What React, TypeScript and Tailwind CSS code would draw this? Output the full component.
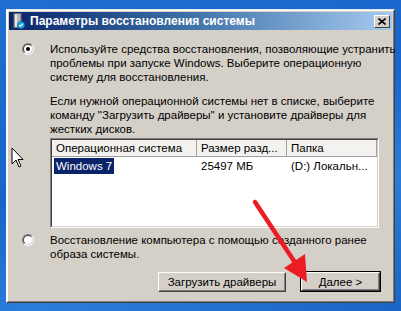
import React from "react";

const font = { fontFamily: '"Liberation Sans", Arial, sans-serif' };

const Radio = ({ checked }: { checked?: boolean }) => (
  <div className="w-[12px] h-[12px] rounded-full border border-t-[#808080] border-l-[#808080] border-r-white border-b-white shrink-0">
    <div className="w-full h-full rounded-full border border-t-[#404040] border-l-[#404040] border-r-[#d4d0c8] border-b-[#d4d0c8] bg-white flex items-center justify-center">
      {checked && <div className="w-[4px] h-[4px] rounded-full bg-black" />}
    </div>
  </div>
);

const WinButton = ({ label, primary }: { label: string; primary?: boolean }) => (
  <div className={primary ? "border border-black" : "border border-transparent"}>
    <div className="w-[79px] h-[19px] border border-t-white border-l-white border-r-[#404040] border-b-[#404040] bg-[#d4d0c8]">
      <div className="w-full h-full border border-t-[#d4d0c8] border-l-[#d4d0c8] border-r-[#808080] border-b-[#808080] flex items-center justify-center text-[11.5px] text-black">
        {label}
      </div>
    </div>
  </div>
);

const HeaderCell = ({ label, w }: { label: string; w: string }) => (
  <div className={`${w} h-[17px] border-r border-r-[#a0a0a0] border-b border-b-[#a0a0a0] bg-[#f3f2ee] pl-[4px] flex items-center whitespace-nowrap overflow-hidden`}>
    {label}
  </div>
);

export default function App() {
  return (
    <div
      className="relative w-[401px] h-[311px] overflow-hidden pl-[6px] pt-[9px] bg-[linear-gradient(160deg,#1f6fd2_0%,#1765cb_45%,#2b7ddb_70%,#1a64c6_100%)]"
      style={font}
    >
      <div className="w-[389px] h-[294px] border border-t-[#e8e6e0] border-l-white border-r-[#404040] border-b-[#404040] bg-[#d4d0c8]">
        <div className="w-full h-full border border-t-white border-l-white border-r-[#808080] border-b-[#808080] p-px flex flex-col">
          {/* title bar */}
          <div className="h-[18px] flex items-center pl-[4px] pr-[2px] bg-[linear-gradient(90deg,#0a246a_0%,#3a6ea5_45%,#a6caf0_100%)]">
            <svg width="12" height="16" viewBox="0 0 12 16" className="shrink-0">
              <rect x="1" y="0.5" width="7" height="14" fill="#b8b8b8" stroke="#6e6e6e" />
              <rect x="2" y="1.5" width="2" height="12" fill="#e8e8e8" />
              <circle cx="8" cy="12" r="3.6" fill="#1ea8e0" stroke="#0b6fa8" strokeWidth="0.8" />
              <path d="M6.3 12 L7.6 13.3 L9.9 10.7" stroke="white" strokeWidth="1.1" fill="none" />
            </svg>
            <span className="ml-[5px] text-[12px] font-bold text-white leading-none whitespace-nowrap">
              Параметры восстановления системы
            </span>
            <div className="ml-auto w-[16px] h-[13px] border border-t-white border-l-white border-r-[#404040] border-b-[#404040] bg-[#d4d0c8] flex items-center justify-center">
              <svg width="8" height="7" viewBox="0 0 8 7">
                <path d="M0.5 0.5 L7.5 6.5 M7.5 0.5 L0.5 6.5" stroke="black" strokeWidth="1.6" />
              </svg>
            </div>
          </div>

          {/* body */}
          <div className="flex flex-col pl-[13px] pt-[12px] text-[11.5px] leading-[14px] text-black">
            <div className="flex gap-[16px]">
              <div className="pt-[1px]">
                <Radio checked />
              </div>
              <div className="flex flex-col">
                <p className="whitespace-nowrap">
                  Используйте средства восстановления, позволяющие устранить
                  <br />
                  проблемы при запуске Windows. Выберите операционную
                  <br />
                  систему для восстановления.
                </p>
                <p className="mt-[10px] whitespace-nowrap">
                  Если нужной операционной системы нет в списке, выберите
                  <br />
                  команду "Загрузить драйверы" и установите драйверы для
                  <br />
                  жестких дисков.
                </p>
                <div className="mt-[2px] w-[329px] h-[90px] border border-t-[#808080] border-l-[#808080] border-r-white border-b-white">
                  <div className="w-full h-full border border-t-[#404040] border-l-[#404040] border-r-[#d4d0c8] border-b-[#d4d0c8] bg-white flex flex-col">
                    <div className="flex">
                      <HeaderCell label="Операционная система" w="w-[145px]" />
                      <HeaderCell label="Размер разд..." w="w-[90px]" />
                      <HeaderCell label="Папка" w="w-[90px]" />
                    </div>
                    <div className="flex h-[17px] items-center">
                      <div className="w-[145px] pl-[2px]">
                        <span className="inline-block bg-[#0a246a] text-white px-[2px] h-[16px] leading-[16px]">
                          Windows 7
                        </span>
                      </div>
                      <div className="w-[90px] pl-[4px]">25497 МБ</div>
                      <div className="w-[90px] pl-[4px] whitespace-nowrap">(D:) Локальн...</div>
                    </div>
                  </div>
                </div>
              </div>
            </div>

            <div className="flex gap-[16px] mt-[5px]">
              <div className="pt-[1px]">
                <Radio />
              </div>
              <p className="whitespace-nowrap">
                Восстановление компьютера с помощью созданного ранее
                <br />
                образа системы.
              </p>
            </div>

            <div className="flex justify-end gap-[14px] mt-[10px] pr-[11px]">
              <div className="pt-px">
                <div className="w-[128px] h-[20px] border border-t-white border-l-white border-r-[#404040] border-b-[#404040] bg-[#d4d0c8]">
                  <div className="w-full h-full border border-t-[#d4d0c8] border-l-[#d4d0c8] border-r-[#808080] border-b-[#808080] flex items-center justify-center">
                    Загрузить драйверы
                  </div>
                </div>
              </div>
              <WinButton label="Далее >" primary />
            </div>
          </div>
        </div>
      </div>

      {/* mouse cursor */}
      <svg className="absolute left-[11px] top-[147px]" width="13" height="21" viewBox="0 0 13 21">
        <path d="M1 1 L1 17 L5 13 L8 20 L10 19 L7 12.5 L12 12.5 Z" fill="white" stroke="black" strokeWidth="1" strokeLinejoin="round" />
      </svg>

      {/* red annotation arrow */}
      <svg className="absolute left-0 top-0 pointer-events-none" width="401" height="311" viewBox="0 0 401 311">
        <line x1="255" y1="202" x2="296" y2="264" stroke="#ec1c24" strokeWidth="4.5" strokeLinecap="round" />
        <polygon points="307,282 284,268 305,254" fill="#ec1c24" />
      </svg>
    </div>
  );
}
